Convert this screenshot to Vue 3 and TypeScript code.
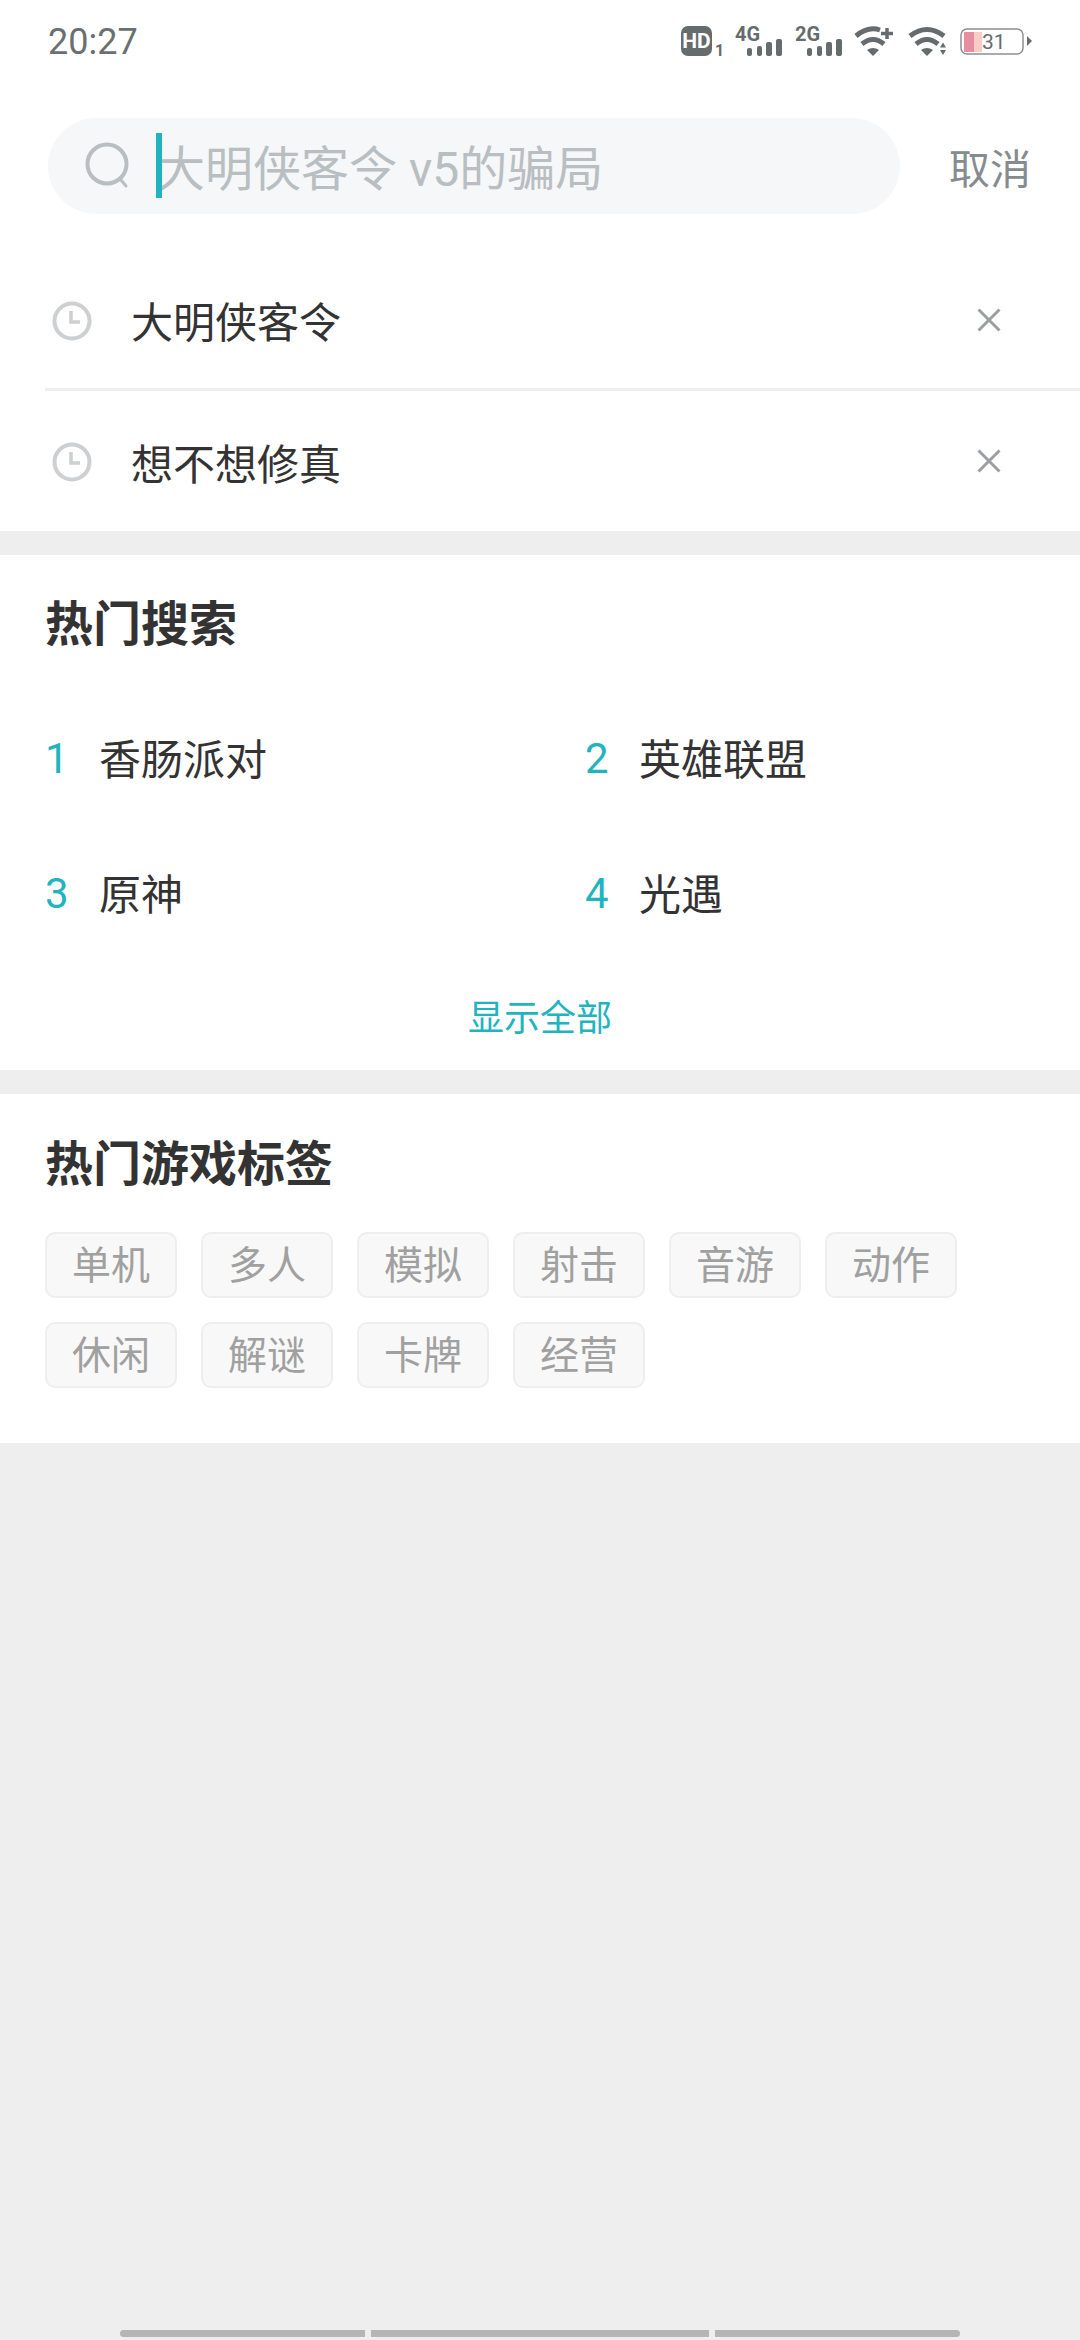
<template>
  <div class="page">
    <div class="top-block">
      <header class="status-bar">
        <span class="time">20:27</span>
        <svg class="status-icons" width="354" height="40" viewBox="0 0 354 40">
          <!-- HD badge -->
          <rect x="1" y="5" width="31" height="30" rx="7" fill="#666b6e" />
          <text x="16.500" y="27" class="hd-text" text-anchor="middle">HD</text>
          <text x="35" y="35" class="sim-text">1</text>
          <!-- 4G -->
          <text x="55" y="20" class="net-text">4G</text>
          <g fill="#666b6e">
            <rect x="67" y="27" width="5" height="8" rx="2" />
            <rect x="77" y="25" width="5" height="10" rx="2" />
            <rect x="86" y="21" width="6" height="14" rx="2" />
            <rect x="96" y="18" width="6" height="17" rx="2" />
          </g>
          <!-- 2G -->
          <text x="115" y="20" class="net-text">2G</text>
          <g fill="#666b6e">
            <rect x="127" y="27" width="5" height="8" rx="2" />
            <rect x="137" y="25" width="5" height="10" rx="2" />
            <rect x="146" y="21" width="6" height="14" rx="2" />
            <rect x="156" y="18" width="6" height="17" rx="2" />
          </g>
          <!-- wifi with plus -->
          <g fill="none" stroke="#666b6e" stroke-width="5">
            <path d="M176 15Q188 5 200 9" />
            <path d="M182 23Q193 14 204 23" />
          </g>
          <path d="M187 29Q193 25 199 29L193 35z" fill="#666b6e" />
          <path d="M201 12.500h12M207 7v11" stroke="#666b6e" stroke-width="3.500" fill="none" />
          <!-- wifi -->
          <g fill="none" stroke="#666b6e" stroke-width="5">
            <path d="M230 15Q247 2 264 15" />
            <path d="M236 23Q247 14 258 23" />
          </g>
          <path d="M241 29Q247 25 253 29L247 35z" fill="#666b6e" />
          <path d="M260 26.500l3-5 3 5zM260 29h6l-3 5z" fill="#666b6e" />
          <!-- battery -->
          <rect x="281" y="8" width="62" height="25" rx="6" fill="#fff" stroke="#8d9093" stroke-width="1.500" />
          <rect x="284" y="11" width="10" height="20" fill="#e78d9f" />
          <rect x="294" y="11" width="8" height="20" fill="#f7cdc6" />
          <text x="302" y="28" class="batt-text">31</text>
          <path d="M347 15l5 5-5 5z" fill="#666b6e" />
        </svg>
      </header>

      <div class="search-row">
        <div class="search-box">
          <svg class="search-icon" width="50" height="50" viewBox="0 0 50 50" fill="none" stroke="#b9bec1">
            <circle cx="23" cy="23" r="19.500" stroke-width="4" />
            <path d="M37 39l5 6" stroke-width="3" stroke-linecap="round" />
          </svg>
          <div class="input-wrap">
            <span class="caret" />
            <span class="placeholder">大明侠客令 v5的骗局</span>
          </div>
        </div>
        <span class="cancel">取消</span>
      </div>

      <ul class="history">
        <li v-for="item in history" :key="item" class="history-row">
          <svg class="clock" width="40" height="40" viewBox="0 0 40 40" fill="none" stroke="#cdcfd0" stroke-width="4">
            <circle cx="20" cy="20" r="17.500" />
            <path d="M19 10v11h9" stroke-width="3.500" />
          </svg>
          <span class="history-text">{{ item }}</span>
          <svg class="close" width="24" height="24" viewBox="0 0 24 24" stroke="#9b9fa1" stroke-width="3" fill="none">
            <path d="M1.500 1.500l21 21M22.500 1.500l-21 21" />
          </svg>
        </li>
      </ul>
    </div>

    <section class="hot">
      <h2 class="hot-title">热门搜索</h2>
      <div class="hot-grid">
        <div v-for="(name, i) in hot" :key="name" class="hot-item">
          <span class="hot-rank">{{ i + 1 }}</span>
          <span class="hot-name">{{ name }}</span>
        </div>
      </div>
      <div class="show-all">显示全部</div>
    </section>

    <section class="tags">
      <h2 class="tags-title">热门游戏标签</h2>
      <div class="tag-list">
        <span v-for="t in tags" :key="t" class="tag">{{ t }}</span>
      </div>
    </section>

    <div class="home-bar">
      <span class="seg seg-a" />
      <span class="seg seg-b" />
      <span class="seg seg-c" />
    </div>
  </div>
</template>

<script setup lang="ts">
const history: string[] = ['大明侠客令', '想不想修真']
const hot: string[] = ['香肠派对', '英雄联盟', '原神', '光遇']
const tags: string[] = ['单机', '多人', '模拟', '射击', '音游', '动作', '休闲', '解谜', '卡牌', '经营']
</script>

<style>
html,
body {
  margin: 0;
  padding: 0;
  background: #eeeeee;
}
</style>

<style scoped>
.page {
  width: 1080px;
  height: 2340px;
  display: flex;
  flex-direction: column;
  background: #eeeeee;
  font-family: Roboto, "Noto Sans CJK SC", sans-serif;
  overflow: hidden;
}

.top-block {
  background: #fff;
  height: 531px;
  display: flex;
  flex-direction: column;
}

.status-bar {
  height: 84px;
  padding: 0 46px 0 48px;
  display: flex;
  align-items: center;
  justify-content: space-between;
}

.time {
  font-size: 36px;
  padding-top: 2px;
  color: #6a6f72;
}

.status-icons {
  display: block;
}

.hd-text {
  font: 700 21px Roboto, sans-serif;
  fill: #fff;
}

.sim-text {
  font: 700 16px Roboto, sans-serif;
  fill: #666b6e;
}

.net-text {
  font: 700 20px Roboto, sans-serif;
  fill: #666b6e;
}

.batt-text {
  font: 400 21px Roboto, sans-serif;
  fill: #666b6e;
}

.search-row {
  margin-top: 36px;
  padding-left: 48px;
  display: flex;
  align-items: center;
}

.search-box {
  width: 852px;
  height: 96px;
  border-radius: 48px;
  background: #f5f7f9;
  padding-left: 36px;
  box-sizing: border-box;
  display: flex;
  align-items: center;
}

.search-icon {
  display: block;
  flex-shrink: 0;
}

.input-wrap {
  position: relative;
  margin-left: 22px;
  display: flex;
  align-items: center;
}

.caret {
  position: absolute;
  left: 0;
  top: -1px;
  width: 6px;
  height: 65px;
  background: #1fb4bf;
}

.placeholder {
  font-size: 48px;
  line-height: 56px;
  color: #b9bec1;
  padding: 8px 0 0 1px;
  white-space: nowrap;
}

.cancel {
  margin-left: 49px;
  font-size: 41px;
  color: #868b8e;
}

.history {
  list-style: none;
  margin: 0;
  padding: 0;
  margin-top: 37px;
}

.history-row {
  height: 140px;
  margin-left: 45px;
  padding-left: 7px;
  display: flex;
  align-items: center;
  box-sizing: border-box;
  border-bottom: 3px solid #eeeeee;
}

.history-row:last-child {
  border-bottom: none;
}

.clock {
  display: block;
  flex-shrink: 0;
  margin-top: 2px;
}

.history-text {
  margin-left: 39px;
  font-size: 42px;
  color: #333333;
  flex: 1;
}

.close {
  margin-right: 79px;
  display: block;
}

.hot {
  margin-top: 24px;
  background: #fff;
  height: 515px;
  padding-left: 45px;
  box-sizing: border-box;
}

.hot-title,
.tags-title {
  margin: 0;
  font-size: 48px;
  font-weight: 700;
  color: #333333;
}

.hot-title {
  padding-top: 37px;
  line-height: 66px;
}

.hot-grid {
  margin-top: 68px;
  display: grid;
  grid-template-columns: 540px 495px;
  grid-auto-rows: 135px;
}

.hot-item {
  display: flex;
  align-items: center;
  height: 60px;
}

.hot-rank {
  width: 54px;
  padding-top: 4px;
  font-size: 42px;
  color: #1fb4bf;
}

.hot-name {
  font-size: 42px;
  color: #333333;
}

.show-all {
  margin-left: -45px;
  margin-top: -2px;
  text-align: center;
  font-size: 36px;
  line-height: 50px;
  color: #1fb4bf;
}

.tags {
  margin-top: 24px;
  background: #fff;
  height: 349px;
  padding-left: 45px;
  box-sizing: border-box;
}

.tags-title {
  padding-top: 38px;
  line-height: 66px;
}

.tag-list {
  margin-top: 34px;
  display: flex;
  flex-wrap: wrap;
  gap: 24px 24px;
  width: 960px;
}

.tag {
  width: 132px;
  height: 66px;
  box-sizing: border-box;
  border: 2px solid #eeeeee;
  border-radius: 10px;
  background: #f8f8f8;
  padding-bottom: 6px;
  display: flex;
  align-items: center;
  justify-content: center;
  font-size: 39px;
  color: #a0a0a0;
}

.home-bar {
  margin-top: auto;
  margin-bottom: 3px;
  padding-left: 120px;
  display: flex;
  gap: 6px;
}

.seg {
  height: 7px;
  background: #b5b5b5;
}

.seg-a {
  width: 245px;
  border-radius: 4px 0 0 4px;
}

.seg-b {
  width: 338px;
}

.seg-c {
  width: 245px;
  border-radius: 0 4px 4px 0;
}
</style>
